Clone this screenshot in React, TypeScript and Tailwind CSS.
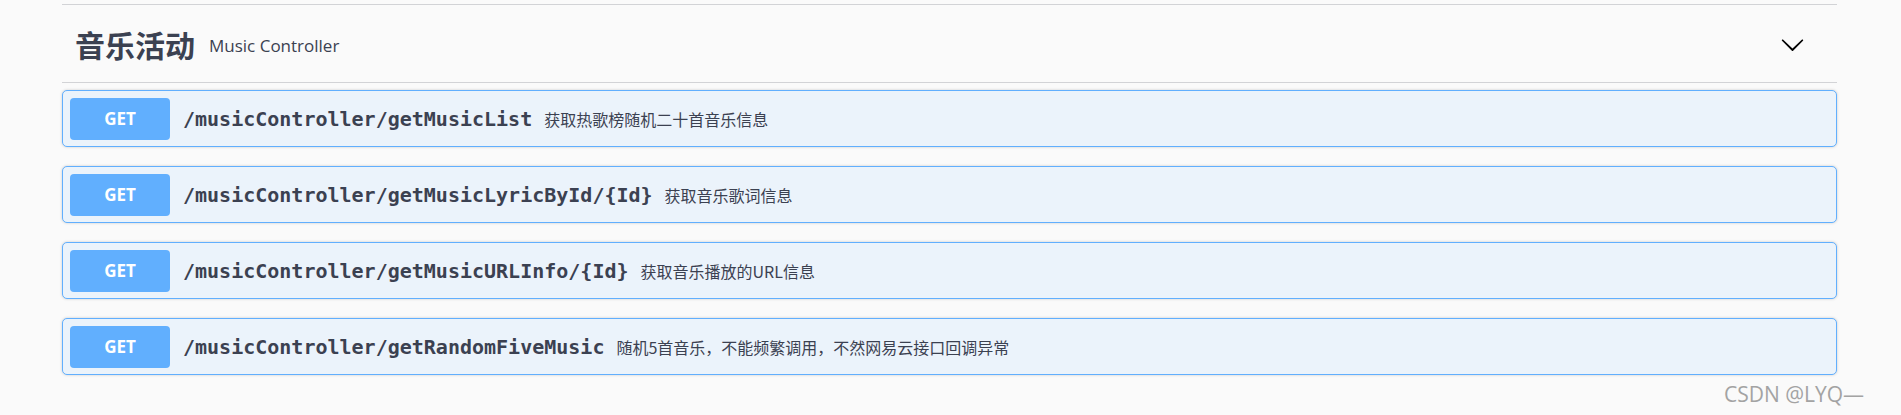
import React from 'react';

const endpoints = [
  { method: 'GET', path: '/musicController/getMusicList', summary: '获取热歌榜随机二十首音乐信息' },
  { method: 'GET', path: '/musicController/getMusicLyricById/{Id}', summary: '获取音乐歌词信息' },
  { method: 'GET', path: '/musicController/getMusicURLInfo/{Id}', summary: '获取音乐播放的URL信息' },
  { method: 'GET', path: '/musicController/getRandomFiveMusic', summary: '随机5首音乐，不能频繁调用，不然网易云接口回调异常' },
];

function Chevron() {
  return (
    <svg width="25" height="25" viewBox="0 0 20 20" className="text-black">
      <path
        fill="currentColor"
        d="M17.418 6.109c.272-.268.709-.268.979 0s.271.701 0 .969l-7.908 7.83c-.27.268-.707.268-.979 0l-7.908-7.83c-.27-.268-.27-.701 0-.969.271-.268.709-.268.979 0L10 13.25l7.418-7.141z"
      />
    </svg>
  );
}

export default function App() {
  return (
    <div
      className="relative h-[415px] w-full overflow-hidden bg-[#fafafa] text-[#3b4151]"
      style={{ fontFamily: '"Open Sans", "Noto Sans CJK SC", sans-serif' }}
    >
      <div className="ml-[62px] w-[1775px] pt-[4px]">
        {/* tag header */}
        <div className="flex h-[79px] items-center border-y border-[#d2d3d6] pl-[13px] pr-[32px]">
          <h3 className="text-[30px] font-bold leading-none" style={{ fontFamily: '"Noto Sans CJK SC", sans-serif' }}>
            音乐活动
          </h3>
          <small className="ml-[14px] pt-[4px] text-[17px] leading-none">Music Controller</small>
          <div className="ml-auto pt-[2px]">
            <Chevron />
          </div>
        </div>

        {/* operations */}
        <div className="mt-[7px] flex flex-col gap-[19px]">
          {endpoints.map((e) => (
            <div
              key={e.path}
              className="flex h-[57px] items-center rounded-[5px] border border-[#61affe] bg-[#ebf3fb] pl-[7px] shadow-[0_0_3px_rgba(0,0,0,0.19)]"
            >
              <span className="flex h-[42px] w-[100px] items-center justify-center rounded-[4px] bg-[#61affe] text-[17px] font-bold text-white">
                {e.method}
              </span>
              <span
                className="ml-[13px] text-[20px] font-bold text-[#3b4151]"
                style={{ fontFamily: '"DejaVu Sans Mono", monospace' }}
              >
                {e.path}
              </span>
              <span
                className="ml-[12px] text-[16px] text-[#3b4151]"
                style={{ fontFamily: '"Noto Sans CJK SC", sans-serif' }}
              >
                {e.summary}
              </span>
            </div>
          ))}
        </div>
      </div>

      <div className="absolute left-[1724px] top-[380px] text-[21px] leading-[28px] text-[#a3a3a3]">CSDN @LYQ—</div>
    </div>
  );
}
